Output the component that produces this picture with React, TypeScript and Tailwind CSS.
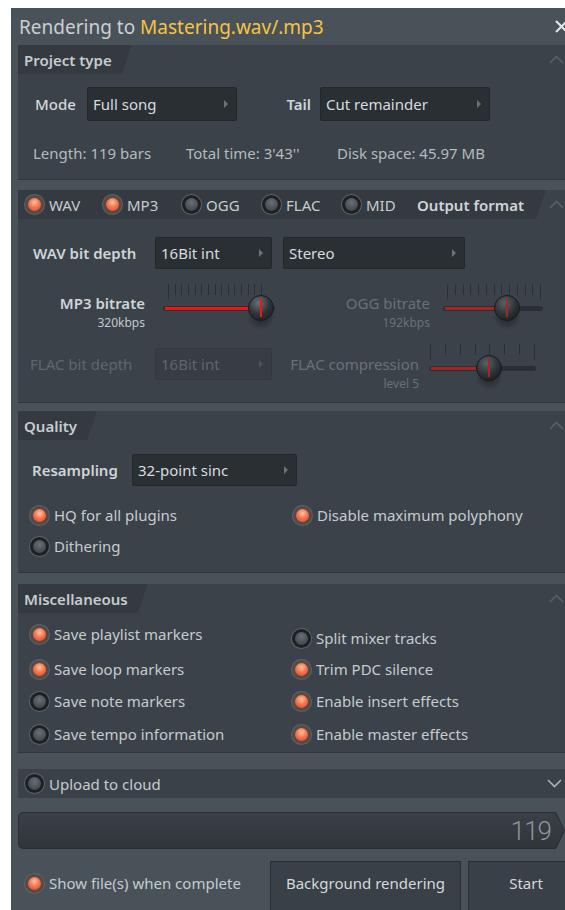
import React from "react";

// LED-style toggle used for every on/off option in the dialog
function Led({ on = false }: { on?: boolean }) {
  return (
    <span
      className={`flex h-[19px] w-[19px] shrink-0 items-center justify-center rounded-full shadow-[0_0_0_1px_#5c646a] ${
        on ? "bg-[#5a4843]" : "bg-[#1d2124]"
      }`}
    >
      <span
        className={`h-[13px] w-[13px] rounded-full ${
          on
            ? "bg-[radial-gradient(circle_at_50%_35%,#ffc6a8_0%,#f4764f_45%,#d2472b_100%)]"
            : "bg-[radial-gradient(circle_at_50%_35%,#687075_0%,#4a5055_60%,#3b4044_100%)]"
        }`}
      />
    </span>
  );
}

function Option({ on, label, className = "" }: { on?: boolean; label: string; className?: string }) {
  return (
    <div className={`flex h-[22px] items-center gap-[5px] ${className}`}>
      <Led on={on} />
      <span className="text-[#c5ccd0]">{label}</span>
    </div>
  );
}

function Chevron({ down = false }: { down?: boolean }) {
  return (
    <svg width="15" height="9" viewBox="0 0 15 9" className="shrink-0">
      <polyline
        points={down ? "1,1 7.5,7.5 14,1" : "1,8 7.5,1.5 14,8"}
        fill="none"
        stroke={down ? "#aab2b7" : "#586067"}
        strokeWidth="1.6"
      />
    </svg>
  );
}

function Select({ value, className = "", dim = false }: { value: string; className?: string; dim?: boolean }) {
  return (
    <div
      className={`flex items-center justify-between rounded-[2px] border pl-[5px] pr-[8px] ${
        dim ? "border-[#32383d] bg-[#373d43] text-[#5e666c]" : "border-[#23282c] bg-[#2a2f34] text-[#d6dcdf]"
      } ${className}`}
    >
      <span>{value}</span>
      <span
        className={`h-0 w-0 border-y-[4px] border-l-[4px] border-y-transparent ${
          dim ? "border-l-[#4d5459]" : "border-l-[#6a7279]"
        }`}
      />
    </div>
  );
}

function PanelHead({ title }: { title: string }) {
  return (
    <div className="flex h-[29px] items-center justify-between pr-[20px]">
      <div className="flex h-full items-center bg-[#343a40] pl-[6px] pr-[20px] font-semibold text-[#c5ccd0] [clip-path:polygon(0_0,100%_0,calc(100%-10px)_100%,0_100%)]">
        {title}
      </div>
      <Chevron />
    </div>
  );
}

type FaderProps = {
  id: string;
  width: number;
  ticks: number;
  t0: number;
  t1: number;
  knob: number;
  track: [number, number];
  dim?: boolean;
};

// horizontal fader: tick ruler, red level line and a round knob
function Fader({ id, width, ticks, t0, t1, knob, track, dim = false }: FaderProps) {
  const step = (t1 - t0) / (ticks - 1);
  const red = dim ? "#a52424" : "#f01414";
  return (
    <svg width={width} height={52} className="shrink-0">
      <defs>
        <radialGradient id={`${id}-k`} cx="40%" cy="30%" r="75%">
          <stop offset="0%" stopColor={dim ? "#5a6166" : "#6a7176"} />
          <stop offset="60%" stopColor="#2e3337" />
          <stop offset="100%" stopColor="#1c2023" />
        </radialGradient>
        <radialGradient id={`${id}-s`} cx="50%" cy="50%" r="50%">
          <stop offset="0%" stopColor="#000" stopOpacity="0.45" />
          <stop offset="100%" stopColor="#000" stopOpacity="0" />
        </radialGradient>
      </defs>
      {Array.from({ length: ticks }, (_, i) => {
        const x = Math.round(t0 + i * step) + 0.5;
        const tall = i === 0 || i === ticks - 1;
        return <line key={i} x1={x} x2={x} y1={4} y2={tall ? 20 : 15} stroke="#2a2f33" strokeWidth="1" />;
      })}
      <rect x={track[0]} y={26} width={track[1] - track[0]} height={5} rx={2.5} fill="#2a2f33" />
      <rect x={track[0] + 2} y={27} width={knob - track[0] - 2} height={3} fill={red} />
      <ellipse cx={knob} cy={37} rx={14} ry={13} fill={`url(#${id}-s)`} />
      <circle cx={knob} cy={28} r={12.5} fill={`url(#${id}-k)`} stroke="#181b1e" strokeWidth="1" />
      <line x1={knob} x2={knob} y1={19} y2={37} stroke={red} strokeWidth="2" />
    </svg>
  );
}

export default function App() {
  return (
    <div className="h-[910px] w-[565px] overflow-hidden bg-white pl-[11px] pt-[8px] font-['Noto_Sans',sans-serif] text-[15px] leading-[20px] text-[#c7ced2]">
      <div className="w-[580px] bg-[#4a5259] pb-[40px]">
        {/* title bar */}
        <div className="flex h-[37px] items-center justify-between pl-[8px] pr-[23px] text-[19px]">
          <div>
            <span className="text-[#c9d0d4]">Rendering to </span>
            <span className="text-[#f5c443]">Mastering.wav/.mp3</span>
          </div>
          <svg width="13" height="13" viewBox="0 0 13 13">
            <path d="M1 1 L12 12 M12 1 L1 12" stroke="#dfe4e7" strokeWidth="2.2" />
          </svg>
        </div>

        <div className="px-[7px]">
          {/* project type */}
          <section className="border-b border-[#30363b] bg-[#3b4249] pb-[16px]">
            <PanelHead title="Project type" />
            <div className="mt-[13px] flex items-center pl-[17px]">
              <span className="w-[52px] font-medium text-[#d2d8db]">Mode</span>
              <Select value="Full song" className="h-[34px] w-[150px]" />
              <span className="w-[83px] pr-[9px] text-right font-semibold text-[#cfd5d8]">Tail</span>
              <Select value="Cut remainder" className="h-[34px] w-[170px]" />
            </div>
            <div className="mt-[22px] flex pl-[15px] text-[#b3bbbf]">
              <span className="w-[153px]">Length: 119 bars</span>
              <span className="w-[151px]">Total time: 3'43''</span>
              <span>Disk space: 45.97 MB</span>
            </div>
          </section>

          {/* output format */}
          <section className="mt-[10px] border-b border-[#30363b] bg-[#3b4249] pb-[4px]">
            <div className="flex h-[29px] items-center justify-between pr-[20px]">
              <div className="flex h-full w-[528px] items-center bg-[#343a40] pl-[7px] [clip-path:polygon(0_0,100%_0,calc(100%-10px)_100%,0_100%)]">
                <Option on label="WAV" className="w-[78px]" />
                <Option on label="MP3" className="w-[79px]" />
                <Option label="OGG" className="w-[80px]" />
                <Option label="FLAC" className="w-[80px]" />
                <Option label="MID" className="w-[75px]" />
                <span className="font-semibold text-[#cfd5d8]">Output format</span>
              </div>
              <Chevron />
            </div>

            <div className="mt-[18px] flex items-center pl-[15px]">
              <span className="w-[122px] font-semibold text-[#cfd5d8]">WAV bit depth</span>
              <Select value="16Bit int" className="h-[32px] w-[117px]" />
              <Select value="Stereo" className="ml-[11px] h-[32px] w-[182px]" />
            </div>

            <div className="mt-[11px] flex h-[56px] items-start pl-[15px]">
              <div className="w-[112px] pt-[13px] text-right">
                <div className="font-semibold text-[#cfd5d8]">MP3 bitrate</div>
                <div className="mt-[2px] text-[12px] leading-[16px] text-[#c2c9cd]">320kbps</div>
              </div>
              <div className="ml-[13px]">
                <Fader id="mp3" width={125} ticks={15} t0={10} t1={103} knob={103} track={[5, 117]} />
              </div>
              <div className="w-[147px] pt-[13px] text-right text-[#697178]">
                <div>OGG bitrate</div>
                <div className="mt-[2px] text-[12px] leading-[16px]">192kbps</div>
              </div>
              <div className="ml-[7px]">
                <Fader id="ogg" width={115} ticks={13} t0={10} t1={103} knob={70} track={[6, 106]} dim />
              </div>
            </div>

            <div className="mt-[4px] flex h-[58px] items-start pl-[12px] text-[#5f676d]">
              <span className="mt-[14px] w-[125px]">FLAC bit depth</span>
              <Select value="16Bit int" className="mt-[8px] h-[32px] w-[117px]" dim />
              <div className="w-[147px] pt-[14px] text-right text-[#697178]">
                <div>FLAC compression</div>
                <div className="mt-[2px] text-[12px] leading-[16px]">level 5</div>
              </div>
              <div className="ml-[7px]">
                <Fader id="flac" width={115} ticks={8} t0={4} t1={108} knob={63} track={[3, 110]} dim />
              </div>
            </div>
          </section>

          {/* quality */}
          <section className="mt-[8px] border-b border-[#30363b] bg-[#3b4249] pb-[15px]">
            <PanelHead title="Quality" />
            <div className="mt-[14px] flex items-center pl-[14px]">
              <span className="w-[100px] font-semibold text-[#cfd5d8]">Resampling</span>
              <Select value="32-point sinc" className="h-[32px] w-[165px]" />
            </div>
            <div className="mt-[18px] flex pl-[12px]">
              <Option on label="HQ for all plugins" className="w-[263px]" />
              <Option on label="Disable maximum polyphony" />
            </div>
            <Option label="Dithering" className="mt-[9px] pl-[12px]" />
          </section>

          {/* miscellaneous */}
          <section className="mt-[11px] border-b border-[#30363b] bg-[#3b4249] pb-[7px]">
            <PanelHead title="Miscellaneous" />
            <div className="flex pl-[12px]">
              <div className="flex w-[262px] flex-col">
                <Option on label="Save playlist markers" className="mt-[10px]" />
                <Option on label="Save loop markers" className="mt-[13px]" />
                <Option label="Save note markers" className="mt-[10px]" />
                <Option label="Save tempo information" className="mt-[11px]" />
              </div>
              <div className="flex flex-col">
                <Option label="Split mixer tracks" className="mt-[14px]" />
                <Option on label="Trim PDC silence" className="mt-[9px]" />
                <Option on label="Enable insert effects" className="mt-[10px]" />
                <Option on label="Enable master effects" className="mt-[11px]" />
              </div>
            </div>
          </section>

          {/* cloud upload strip */}
          <div className="mt-[16px] flex h-[29px] items-center justify-between bg-[#3a4148] pl-[7px] pr-[22px]">
            <Option label="Upload to cloud" />
            <Chevron down />
          </div>

          {/* progress */}
          <div className="mt-[14px] h-[37px] w-[547px] rounded-l-[5px] bg-[#2a2f33] p-px [clip-path:polygon(0_0,calc(100%-9px)_0,100%_50%,calc(100%-9px)_100%,0_100%)]">
            <div className="flex h-full items-center justify-end rounded-l-[4px] bg-[linear-gradient(#3a4046,#30353a)] pr-[13px] [clip-path:polygon(0_0,calc(100%-9px)_0,100%_50%,calc(100%-9px)_100%,0_100%)]">
              <span className="font-['Roboto',sans-serif] text-[26px] font-light tracking-[-1px] text-[#8d959b]">119</span>
            </div>
          </div>

          {/* footer */}
          <div className="mt-[12px] flex items-start justify-between">
            <Option on label="Show file(s) when complete" className="mt-[11px] pl-[7px]" />
            <div className="flex gap-[7px]">
              <div className="h-[60px] w-[191px] border border-[#2a2f34] bg-[#3a4047] pt-[11px] text-center text-[#d3d9dc]">
                Background rendering
              </div>
              <div className="h-[60px] w-[116px] border border-[#2a2f34] bg-[#3a4047] pt-[11px] text-center text-[#d3d9dc]">
                Start
              </div>
            </div>
          </div>
        </div>
      </div>
    </div>
  );
}
